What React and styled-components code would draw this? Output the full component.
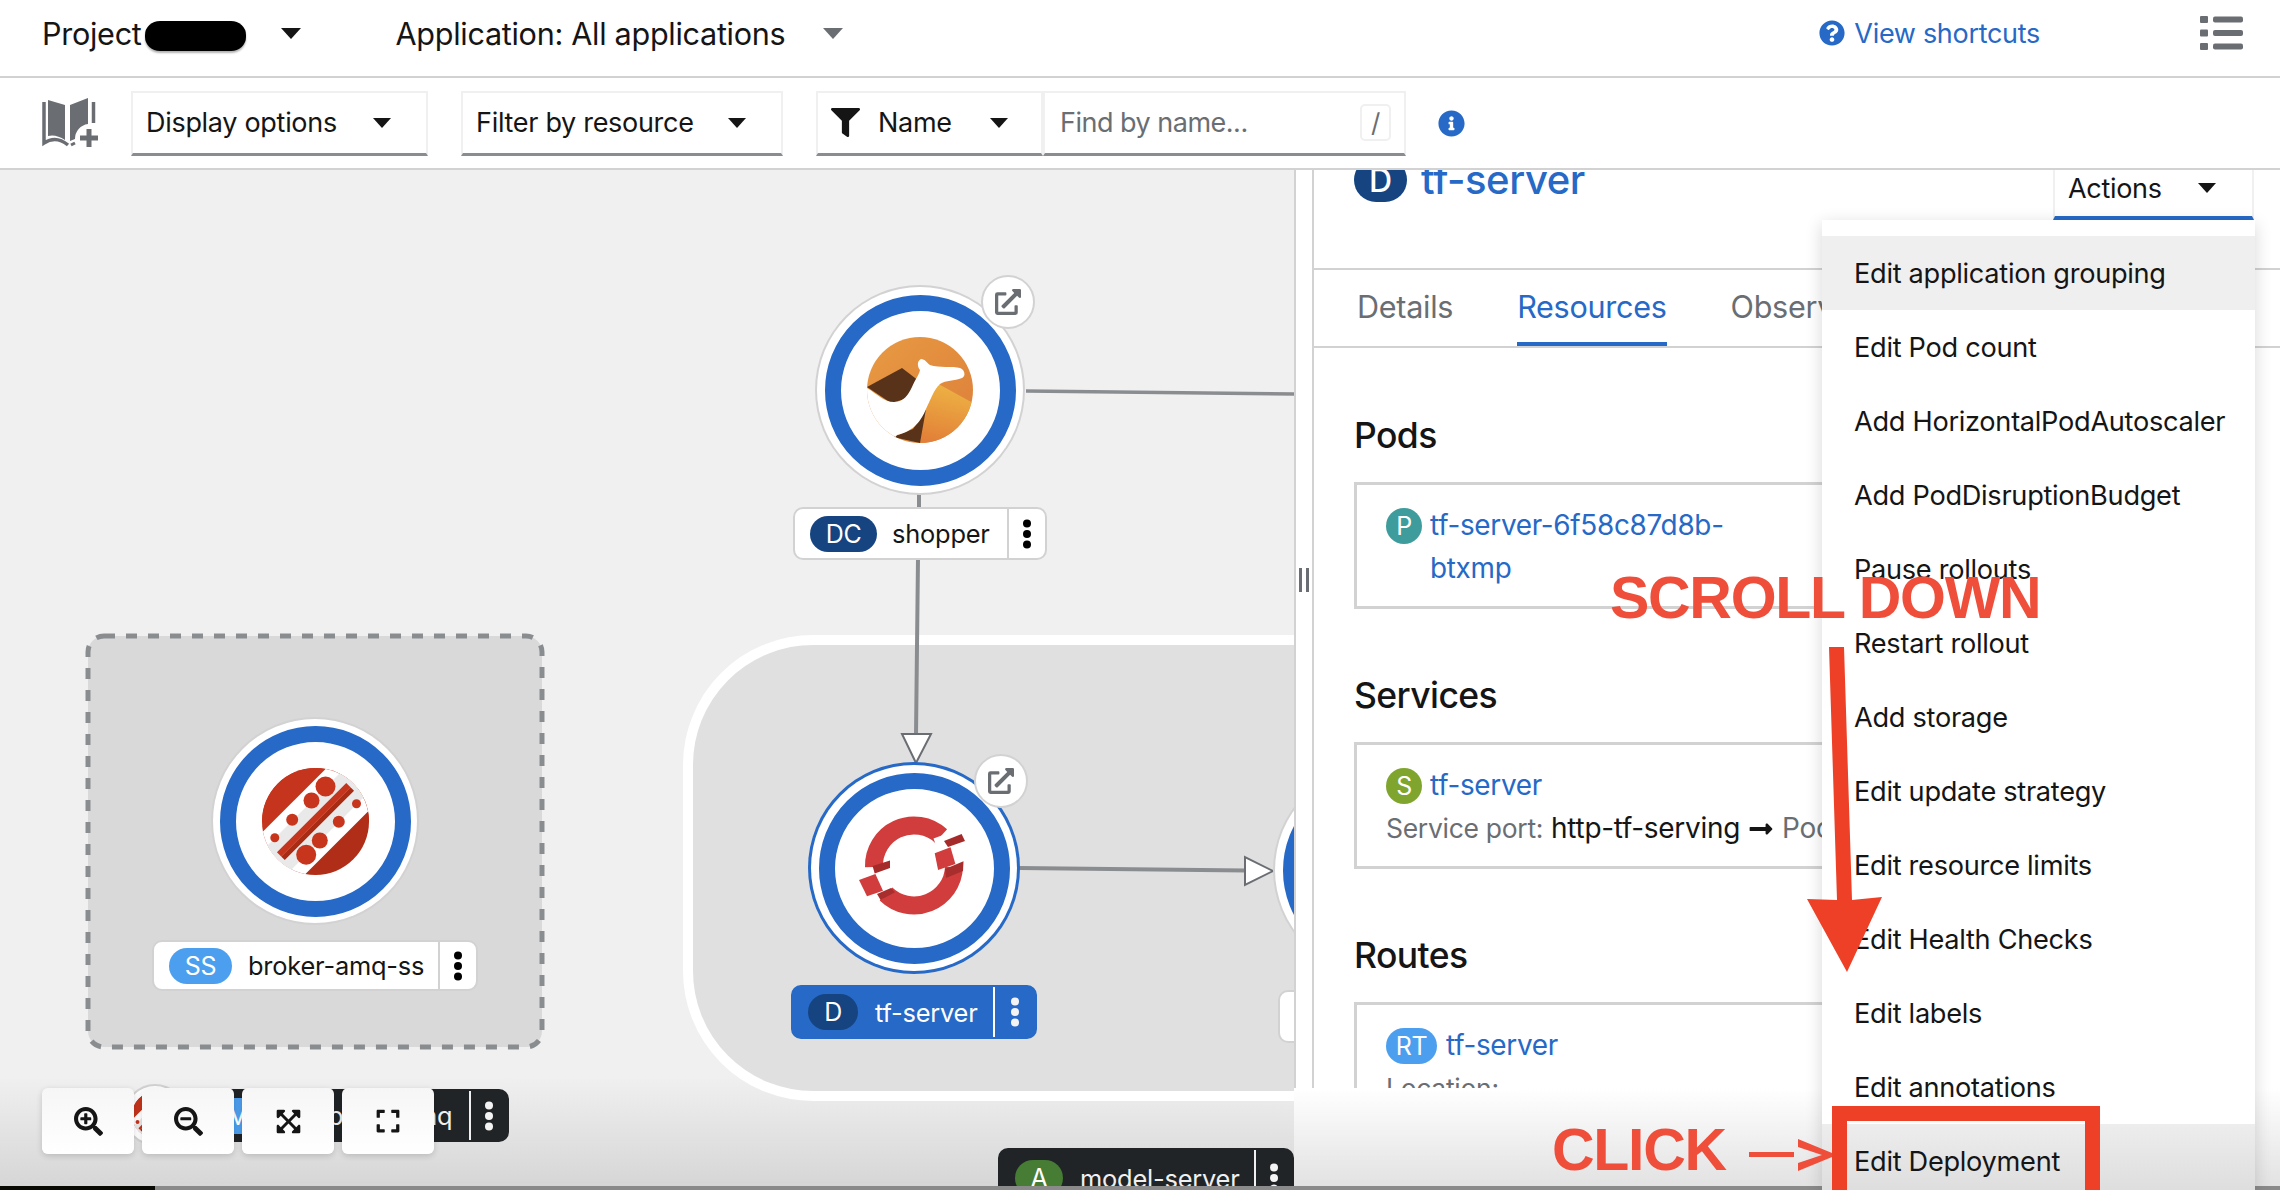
import React from "react";
import styled, { createGlobalStyle, css } from "styled-components";
import {
  FaSearchPlus, FaSearchMinus, FaExpandArrowsAlt, FaExpand,
  FaExternalLinkAlt, FaFilter, FaInfoCircle, FaQuestionCircle, FaLongArrowAltRight,
} from "react-icons/fa";

const BLUE = "#2669c6";
const LINE = "#d2d2d2";
const GREY = "#6a6e73";
const TOP = 170;

const Global = createGlobalStyle`
  html, body { margin: 0; padding: 0; background: #fff; }
  body { font-family: Inter, "Noto Sans", sans-serif; color: #151515; }
  * { box-sizing: border-box; }
`;

const Page = styled.div`
  position: relative;
  width: 2280px;
  height: 1190px;
  overflow: hidden;
  display: flex;
  flex-direction: column;
  background: #fff;
  font-size: 27px;
  letter-spacing: -0.3px;
`;

/* ---------- top bars ---------- */
const Header = styled.header`
  height: 78px;
  flex: none;
  display: flex;
  align-items: center;
  padding: 0 37px 10px 42px;
  border-bottom: 2px solid ${LINE};
`;
const HeaderText = styled.span`
  font-size: 30.6px;
  white-space: nowrap;
`;
const Redaction = styled.span`
  display: block;
  flex: none;
  width: 101px;
  height: 30px;
  margin: 6px 35px 0 3px;
  border-radius: 15px / 14px;
  background: #000;
  box-shadow: 0 2px 2px rgba(0, 0, 0, 0.3);
`;
const Caret = styled.span`
  display: block;
  flex: none;
  width: 0;
  height: 0;
  margin-left: ${(p) => p.$ml || 0};
  border-left: ${(p) => p.$size || 9}px solid transparent;
  border-right: ${(p) => p.$size || 9}px solid transparent;
  border-top: ${(p) => (p.$size || 9) * 1.15}px solid ${(p) => p.$color || "#151515"};
`;
const AppPicker = styled.div`
  display: flex;
  align-items: center;
  margin-left: 95px;
  gap: 38px;
`;
const Shortcuts = styled.a`
  display: flex;
  align-items: center;
  gap: 9px;
  margin-left: auto;
  color: ${BLUE};
  font-size: 27px;
`;
const ListGlyph = styled.svg`
  width: 43px;
  height: 34px;
  margin-left: 160px;
  margin-top: 0;
  fill: ${GREY};
`;

const Toolbar = styled.div`
  height: 92px;
  flex: none;
  display: flex;
  align-items: center;
  padding: 0 0 0 42px;
  border-bottom: 2px solid ${LINE};
`;
const BookGlyph = styled.svg`
  width: 58px;
  height: 50px;
  margin-right: 31px;
  flex: none;
`;
const Field = styled.div`
  display: flex;
  align-items: center;
  justify-content: space-between;
  width: ${(p) => p.$w}px;
  height: 65px;
  padding: 0 ${(p) => p.$pr || 35}px 0 13px;
  border: 2px solid #f0f0f0;
  border-bottom: 3px solid #8a8d90;
  margin-right: ${(p) => p.$mr || 0}px;
  flex: none;
  white-space: nowrap;
`;
const NameText = styled.span`
  margin-left: 18px;
`;
const Placeholder = styled.span`
  color: ${GREY};
  margin-left: 2px;
  letter-spacing: -0.5px;
`;
const Slash = styled.span`
  display: flex;
  align-items: center;
  justify-content: center;
  width: 31px;
  height: 37px;
  border: 2px solid #f0f0f0;
  border-radius: 5px;
  color: ${GREY};
  font-size: 26px;
`;
const InfoWrap = styled.span`
  display: flex;
  margin-left: 32px;
  color: ${BLUE};
`;

/* ---------- main area ---------- */
const Main = styled.main`
  flex: 1;
  min-height: 0;
  display: flex;
`;
const Canvas = styled.section`
  position: relative;
  width: 1294px;
  flex: none;
  overflow: hidden;
  background: linear-gradient(to top, #d6d6d6 0, #f0f0f0 110px);
`;
const placed = css`
  position: absolute;
  left: ${(p) => p.$x}px;
  top: ${(p) => p.$y - TOP}px;
`;
const Group = styled.div`
  ${placed}
  width: 800px;
  height: 466px;
  border: 10px solid #fff;
  border-radius: 130px;
  background: #e0e0e0;
`;
const Diagram = styled.svg`
  position: absolute;
  left: 0;
  top: 0;
`;
const Disc = styled.div`
  ${placed}
  width: ${(p) => p.$r * 2}px;
  height: ${(p) => p.$r * 2}px;
  margin: ${(p) => -p.$r}px 0 0 ${(p) => -p.$r}px;
  display: flex;
  align-items: center;
  justify-content: center;
  border-radius: 50%;
  background: #fff;
  box-shadow: ${(p) =>
    p.$selected ? `0 0 0 3px ${BLUE}` : "0 0 0 2px #d2d2d2"};
`;
const Ring = styled.div`
  width: 191px;
  height: 191px;
  display: flex;
  align-items: center;
  justify-content: center;
  border: 16px solid ${BLUE};
  border-radius: 50%;
  flex: none;
`;
const LinkBadge = styled.div`
  ${placed}
  width: 54px;
  height: 54px;
  margin: -27px 0 0 -27px;
  display: flex;
  align-items: center;
  justify-content: center;
  border-radius: 50%;
  background: #fff;
  border: 2px solid #d2d2d2;
  color: ${GREY};
`;
const tones = {
  light: { bg: "#fff", fg: "#151515", sep: "#d2d2d2", edge: "#d2d2d2" },
  selected: { bg: BLUE, fg: "#fff", sep: "#fff", edge: BLUE },
  dark: { bg: "#212427", fg: "#f0f0f0", sep: "#f0f0f0", edge: "#212427" },
};
const TopoLabel = styled.div`
  ${placed}
  width: ${(p) => p.$w}px;
  height: ${(p) => p.$h || 53}px;
  display: flex;
  align-items: center;
  padding-left: ${(p) => p.$pl || 15}px;
  border-radius: 10px;
  background: ${(p) => tones[p.$tone].bg};
  color: ${(p) => tones[p.$tone].fg};
  border: 2px solid ${(p) => tones[p.$tone].edge};
  white-space: nowrap;
  font-size: 25.4px;
  letter-spacing: -0.2px;
`;
const KindBadge = styled.span`
  display: flex;
  align-items: center;
  justify-content: center;
  flex: none;
  width: ${(p) => p.$w || 36}px;
  height: 36px;
  border-radius: 18px;
  background: ${(p) => p.$bg};
  color: #fff;
  font-size: ${(p) => p.$fs || 25}px;
  letter-spacing: -0.3px;
  margin-right: ${(p) => p.$mr ?? 8}px;
`;
const LabelName = styled.span`
  flex: 1;
`;
const KebabCell = styled.span`
  display: flex;
  align-items: center;
  justify-content: center;
  flex: none;
  align-self: stretch;
  width: ${(p) => (p.$tone === "selected" ? 42 : 38)}px;
  border-left: 2px solid ${(p) => tones[p.$tone].sep};
`;
const ZoomBar = styled.div`
  ${placed}
  display: flex;
  gap: 8px;
`;
const ZoomButton = styled.button`
  width: 92px;
  height: 66px;
  padding: 0;
  display: flex;
  align-items: center;
  justify-content: center;
  border: 0;
  border-radius: 6px;
  background: linear-gradient(#f6f6f6, #fff);
  box-shadow: 0 2px 6px rgba(0, 0, 0, 0.16);
  color: #151515;
`;

/* ---------- side panel ---------- */
const RightColumn = styled.div`
  flex: 1;
  min-width: 0;
  display: flex;
  flex-direction: column;
`;
const PanelRow = styled.div`
  flex: 1;
  min-height: 0;
  display: flex;
  border-left: 2px solid ${LINE};
  overflow: hidden;
`;
const Gutter = styled.div`
  width: 16px;
  flex: none;
  display: flex;
  justify-content: center;
  gap: 4px;
  padding-top: 398px;
  &::before, &::after {
    content: "";
    display: block;
    width: 3px;
    height: 24px;
    background: ${GREY};
  }
`;
const Panel = styled.div`
  flex: 1;
  min-width: 0;
  border-left: 2px solid ${LINE};
  display: flex;
  flex-direction: column;
`;
const TitleRow = styled.div`
  height: 100px;
  flex: none;
  display: flex;
  padding: 0 26px 0 40px;
  border-bottom: 2px solid ${LINE};
`;
const TitleBadge = styled.span`
  display: flex;
  align-items: center;
  justify-content: center;
  width: 53px;
  height: 44px;
  margin-top: -12px;
  border-radius: 22px;
  background: #154481;
  color: #fff;
  font-size: 32px;
  font-weight: 500;
`;
const TitleText = styled.a`
  margin: -15px 0 0 14px;
  font-size: 40px;
  font-weight: 500;
  line-height: 50px;
  letter-spacing: -0.4px;
  color: ${BLUE};
`;
const ActionsButton = styled.div`
  margin-left: auto;
  width: 201px;
  height: 50px;
  display: flex;
  align-items: center;
  justify-content: space-between;
  padding: 0 36px 10px 13px;
  border: 2px solid #f0f0f0;
  border-top: 0;
  border-bottom: 4px solid ${BLUE};
`;
const TabBar = styled.nav`
  height: 78px;
  flex: none;
  display: flex;
  gap: 64px;
  padding-left: 43px;
  border-bottom: 2px solid ${LINE};
`;
const Tab = styled.a`
  height: 76px;
  display: flex;
  align-items: center;
  font-size: 30.6px;
  color: ${(p) => (p.$active ? BLUE : GREY)};
  border-bottom: 4px solid ${(p) => (p.$active ? BLUE : "transparent")};
`;
const Sections = styled.div`
  padding: 65px 26px 0 40px;
  display: flex;
  flex-direction: column;
  gap: 64px;
`;
const Heading = styled.h2`
  margin: 1px 0 24px;
  font-size: 35.5px;
  line-height: 44px;
  font-weight: 500;
  letter-spacing: -0.6px;
`;
const ResourceBox = styled.div`
  height: 127px;
  padding: 19px 0 0 29px;
  border: 3px solid ${LINE};
  line-height: 43px;
  white-space: nowrap;
`;
const ResourceRow = styled.div`
  display: flex;
  align-items: flex-start;
`;
const ResourceBadge = styled(KindBadge)`
  margin-top: 4px;
`;
const LinkText = styled.a`
  display: block;
  color: ${BLUE};
  font-size: 27.9px;
`;
const Detail = styled.div`
  color: ${GREY};
  font-size: 26.5px;
  display: flex;
  align-items: center;
`;
const Strong = styled.span`
  color: ${(p) => p.$color || "#151515"};
  font-size: 28px;
  margin: 0 8px;
`;
const PanelFooter = styled.div`
  height: 98px;
  flex: none;
  background: linear-gradient(#fff, #e2e2e2);
`;
const StatusStrip = styled.div`
  height: 4px;
  flex: none;
  background: linear-gradient(to right, #0a0a05 155px, #8a8a8a 155px);
`;

/* ---------- actions menu ---------- */
const Menu = styled.ul`
  position: absolute;
  left: 1822px;
  top: 220px;
  width: 433px;
  height: 970px;
  margin: 0;
  padding: 16px 0 0;
  list-style: none;
  overflow: hidden;
  background: #fff;
  box-shadow: 0 4px 16px rgba(0, 0, 0, 0.16);
`;
const MenuItem = styled.li`
  height: 74px;
  flex: none;
  display: flex;
  align-items: center;
  padding-left: 32px;
  white-space: nowrap;
  font-size: 27.2px;
  background: ${(p) =>
    p.$state === "hover"
      ? "#efefef"
      : p.$state === "faded"
      ? "linear-gradient(#ededed, #dcdcdc)"
      : "transparent"};
`;

/* ---------- red annotations ---------- */
const Callout = styled.div`
  position: absolute;
  left: ${(p) => p.$x}px;
  top: ${(p) => p.$y}px;
  font-family: "Liberation Sans", Arial, sans-serif;
  font-weight: 700;
  font-size: 59px;
  line-height: 60px;
  letter-spacing: -1.3px;
  color: #ef4e3a;
  white-space: nowrap;
`;
const Scribble = styled.svg`
  position: absolute;
  left: 0;
  top: 0;
  pointer-events: none;
`;
const RedBox = styled.div`
  position: absolute;
  left: 1832px;
  top: 1106px;
  width: 268px;
  height: 100px;
  border: 15px solid #ee4027;
`;

const Kebab = ({ color }) => (
  <svg width="12" height="32" viewBox="0 0 12 32" fill={color}>
    <circle cx="6" cy="5.5" r="4" />
    <circle cx="6" cy="16" r="4" />
    <circle cx="6" cy="26.5" r="4" />
  </svg>
);

const CamelLogo = () => (
  <svg width="106" height="106" viewBox="0 0 106 106">
    <defs>
      <clipPath id="camelClip"><circle cx="53" cy="53" r="53" /></clipPath>
      <linearGradient id="camelSky" x1="0" y1="0" x2="1" y2="1">
        <stop offset="0" stopColor="#e89a42" />
        <stop offset="1" stopColor="#dc7f3a" />
      </linearGradient>
      <linearGradient id="camelHill" x1="0.5" y1="0" x2="0.3" y2="1">
        <stop offset="0" stopColor="#eeb544" />
        <stop offset="1" stopColor="#e27f38" />
      </linearGradient>
    </defs>
    <g clipPath="url(#camelClip)">
      <rect width="106" height="106" fill="url(#camelSky)" />
      <path d="M66 44 L106 66 L106 106 L52 106 L58 73 Z" fill="url(#camelHill)" />
      <path d="M0 50 L35 31 L52 44 L38 62 L24 66 Z" fill="#58331a" />
      <path d="M59 72 L53 106 L26 100 L46 92 Z" fill="#58331a" />
      <path d="M0 51 C10 57 17 65 27 65 C37 65 41 58 45 50 C48 43 52 38 53 33 C50 29 50 24 54 22 C58 22 60 26 63 28 C72 31 86 29 93 31 C98 33 99 39 95 41 C87 44 79 43 73 47 C67 52 63 64 59 72 C54 84 47 94 30 98 L20 110 L-4 100 Z" fill="#fff" />
    </g>
  </svg>
);

const ShiftLogo = () => (
  <svg width="116" height="110" viewBox="-58 -52 116 110">
    <path d="M-40 2 A40 40 0 0 1 27 -29" fill="none" stroke="#d13c3c" strokeWidth="18" />
    <path d="M40 2 A40 40 0 0 1 -28 29" fill="none" stroke="#d13c3c" strokeWidth="18" />
    <rect x="21" y="-30" width="40" height="14" fill="#fff" transform="rotate(-20 30 -24)" />
    <polygon points="30,-24 47.6,-31 51,-24 34,-18" fill="#a52a2a" />
    <polygon points="20.7,-11.7 36.5,-17.7 41.4,-1 24.1,5" fill="#d13c3c" />
    <polygon points="31,4 49.5,-3.7 49,6 32,13" fill="#a82e2e" />
    <polygon points="-41.4,1 -24,-4.5 -24,3 -39.3,8.5" fill="#a52a2a" />
    <polygon points="-60,9 -38,10 -24,26 -32,34 -50,32" fill="#fff" />
    <polygon points="-55,15 -38.6,9 -31,25.7 -47,31.3" fill="#d13c3c" />
    <polygon points="-37,29 -23,23 -19,27.3 -33.4,35" fill="#a82e2e" />
  </svg>
);

const amqDots = [
  [10, -35, 10], [-4, -21, 8], [-23.3, -1.7, 6], [-40.7, 16.3, 4.5],
  [41, -17.7, 4.5], [23.3, 0.3, 6], [4.3, 19, 8], [-9.3, 33.3, 10],
];
const AmqLogo = ({ size = 107, id = "amq" }) => (
  <svg width={size} height={size} viewBox="-53.5 -53.5 107 107">
    <defs><clipPath id={id}><circle r="53.5" /></clipPath></defs>
    <g clipPath={`url(#${id})`}>
      <rect x="-54" y="-54" width="108" height="54" fill="#c5341c" />
      <polygon points="-54,-54 54,-54 -54,54" fill="#c5341c" />
      <polygon points="54,-54 54,54 -54,54" fill="#b02d17" />
      <g transform="rotate(-45)">
        <rect x="-70" y="-30" width="140" height="60" fill="#fff" />
        <rect x="-70" y="-17" width="140" height="34" fill="#e9e9e9" />
        <rect x="-49" y="-5.5" width="98" height="6" fill="#c5341c" />
        <rect x="-49" y="0.5" width="98" height="5" fill="#a82b14" />
      </g>
      {amqDots.map(([x, y, r]) => (
        <circle key={`${x}${y}`} cx={x} cy={y} r={r} fill="#c8351d" />
      ))}
    </g>
  </svg>
);

const menuItems = [
  "Edit application grouping", "Edit Pod count", "Add HorizontalPodAutoscaler",
  "Add PodDisruptionBudget", "Pause rollouts", "Restart rollout", "Add storage",
  "Edit update strategy", "Edit resource limits", "Edit Health Checks",
  "Edit labels", "Edit annotations", "Edit Deployment",
];

const Label = ({ x, y, w, tone, badge, badgeW, badgeBg, name, gap, pl, h, kebab = true }) => (
  <TopoLabel $x={x} $y={y} $w={w} $tone={tone} $pl={pl} $h={h}>
    <KindBadge $w={badgeW} $bg={badgeBg} $mr={gap}>{badge}</KindBadge>
    <LabelName>{name}</LabelName>
    {kebab && (
      <KebabCell $tone={tone}>
        <Kebab color={tone === "light" ? "#000" : "#f4f4f4"} />
      </KebabCell>
    )}
  </TopoLabel>
);

export default function App() {
  return (
    <Page>
      <Global />
      <Header>
        <HeaderText>Project</HeaderText>
        <Redaction />
        <Caret $size={10} />
        <AppPicker>
          <HeaderText>Application: All applications</HeaderText>
          <Caret $size={10} $color={GREY} />
        </AppPicker>
        <Shortcuts>
          <FaQuestionCircle size={26} />
          View shortcuts
        </Shortcuts>
        <ListGlyph viewBox="0 0 43 34">
          <rect x="0" y="0" width="8" height="7" rx="1" />
          <rect x="0" y="13.5" width="8" height="7" rx="1" />
          <rect x="0" y="27" width="8" height="7" rx="1" />
          <rect x="13" y="0.5" width="30" height="6" rx="2" />
          <rect x="13" y="14" width="30" height="6" rx="2" />
          <rect x="13" y="27.5" width="30" height="6" rx="2" />
        </ListGlyph>
      </Header>

      <Toolbar>
        <BookGlyph viewBox="0 0 58 50">
          <path fill={GREY} d="M6 2 L23 7 V42 Q14 36 6 38 Z" />
          <path fill={GREY} d="M28 7 L46 0 V26 A15 15 0 0 0 33 41 L28 43 Z" />
          <path fill="none" stroke={GREY} strokeWidth="3.5" d="M2 4 V45 Q14 37 26 47" />
          <path fill="none" stroke={GREY} strokeWidth="3.5" d="M51.5 4 V25" />
          <path fill="none" stroke={GREY} strokeWidth="3" d="M29 47 L33 45" />
          <path fill="none" stroke={GREY} strokeWidth="5" d="M47 31 V49 M38 40 H56" />
        </BookGlyph>
        <Field $w={297} $mr={33}>
          Display options
          <Caret />
        </Field>
        <Field $w={322} $mr={33}>
          Filter by resource
          <Caret />
        </Field>
        <Field $w={227} $pr={33}>
          <FaFilter size={29} />
          <NameText>Name</NameText>
          <Caret $ml="auto" />
        </Field>
        <Field $w={363} $pr={13}>
          <Placeholder>Find by name...</Placeholder>
          <Slash>/</Slash>
        </Field>
        <InfoWrap><FaInfoCircle size={27} /></InfoWrap>
      </Toolbar>

      <Main>
        <Canvas>
          <Group $x={683} $y={635} />
          <Diagram width="1294" height="1016" viewBox={`0 ${TOP} 1294 1016`}>
            <rect x="88" y="636" width="454" height="411" rx="16" fill="#d9d9d9"
              stroke="#8a8d90" strokeWidth="5" strokeDasharray="11 11" />
            <path d="M1026 391 L1294 394" stroke="#8a8d90" strokeWidth="3.5" />
            <path d="M919 492 V510 M918 558 L916 735" stroke="#8a8d90" strokeWidth="4" fill="none" />
            <path d="M1019 868 L1246 870.5" stroke="#8a8d90" strokeWidth="4" />
            <polygon points="902,734 931,734 916,763" fill="#fff" stroke={GREY} strokeWidth="2" />
            <polygon points="1245,857 1245,885 1273,871" fill="#fff" stroke={GREY} strokeWidth="2" />
          </Diagram>

          <Disc $x={315} $y={821} $r={102}><Ring><AmqLogo /></Ring></Disc>
          <Label x={152} y={940} w={326} h={51} tone="light" badge="SS" badgeW={63} badgeBg="#4c9fee" gap={16} name="broker-amq-ss" />

          <Disc $x={920} $y={390} $r={103}><Ring><CamelLogo /></Ring></Disc>
          <LinkBadge $x={1008} $y={302}><FaExternalLinkAlt size={26} /></LinkBadge>
          <Label x={793} y={507} w={254} tone="light" badge="DC" badgeW={67} badgeBg="#154481" gap={15} name="shopper" />

          <Disc $x={914} $y={868} $r={103} $selected><Ring><ShiftLogo /></Ring></Disc>
          <LinkBadge $x={1001} $y={781}><FaExternalLinkAlt size={26} /></LinkBadge>
          <Label x={791} y={985} w={246} h={54} tone="selected" badge="D" badgeW={50} badgeBg="#154481" gap={17} name="tf-server" />

          <Disc $x={1378} $y={870} $r={103}><Ring /></Disc>
          <Label x={1278} y={990} w={200} tone="light" badge="DC" badgeW={67} badgeBg="#154481" gap={15} name="" kebab={false} />

          <Label x={142} y={1089} w={367} tone="dark" badge="M" badgeW={52} badgeBg="#4c9fee" gap={64} pl={68} name="broker-mq" />
          <Disc $x={155} $y={1115} $r={29}><AmqLogo size={46} id="amqSmall" /></Disc>
          <Label x={998} y={1148} w={296} h={60} tone="dark" badge="A" badgeW={48} badgeBg="#467c34" gap={17} name="model-server" />

          <ZoomBar $x={42} $y={1088}>
            <ZoomButton><FaSearchPlus size={29} /></ZoomButton>
            <ZoomButton><FaSearchMinus size={29} /></ZoomButton>
            <ZoomButton><FaExpandArrowsAlt size={27} /></ZoomButton>
            <ZoomButton><FaExpand size={26} /></ZoomButton>
          </ZoomBar>
        </Canvas>

        <RightColumn>
          <PanelRow>
            <Gutter />
            <Panel>
              <TitleRow>
                <TitleBadge>D</TitleBadge>
                <TitleText>tf-server</TitleText>
                <ActionsButton>Actions<Caret /></ActionsButton>
              </TitleRow>
              <TabBar>
                <Tab>Details</Tab>
                <Tab $active>Resources</Tab>
                <Tab>Observe</Tab>
              </TabBar>
              <Sections>
                <section>
                  <Heading>Pods</Heading>
                  <ResourceBox>
                    <ResourceRow>
                      <ResourceBadge $bg="#3f9c9c" $mr={8}>P</ResourceBadge>
                      <div>
                        <LinkText>tf-server-6f58c87d8b-</LinkText>
                        <LinkText>btxmp</LinkText>
                      </div>
                    </ResourceRow>
                  </ResourceBox>
                </section>
                <section>
                  <Heading>Services</Heading>
                  <ResourceBox>
                    <ResourceRow>
                      <ResourceBadge $bg="#7fa52f" $mr={8}>S</ResourceBadge>
                      <LinkText>tf-server</LinkText>
                    </ResourceRow>
                    <Detail>
                      Service port:<Strong>http-tf-serving</Strong>
                      <FaLongArrowAltRight size={26} color="#151515" />
                      <Strong $color={GREY}>Pod port: 8501</Strong>
                    </Detail>
                  </ResourceBox>
                </section>
                <section>
                  <Heading>Routes</Heading>
                  <ResourceBox>
                    <ResourceRow>
                      <ResourceBadge $w={51} $bg="#4c9fee" $mr={9}>RT</ResourceBadge>
                      <LinkText>tf-server</LinkText>
                    </ResourceRow>
                    <Detail>Location:</Detail>
                  </ResourceBox>
                </section>
              </Sections>
            </Panel>
          </PanelRow>
          <PanelFooter />
        </RightColumn>
      </Main>
      <StatusStrip />

      <Menu>
        {menuItems.map((item, i) => (
          <MenuItem key={item} $state={i === 0 ? "hover" : i === menuItems.length - 1 ? "faded" : "none"}>
            {item}
          </MenuItem>
        ))}
      </Menu>

      <Callout $x={1610} $y={568}>SCROLL DOWN</Callout>
      <Callout $x={1552} $y={1120}>CLICK</Callout>
      <Scribble width="2280" height="1190" viewBox="0 0 2280 1190">
        <polygon points="1829,647 1844,647 1852,900 1882,897 1847,972 1807,899 1837,900" fill="#ee4027" />
        <rect x="1749" y="1152" width="45" height="5" fill="#ef4e3a" />
        <polygon points="1798,1139 1832,1153 1832,1157 1798,1171 1798,1163 1822,1155 1798,1147" fill="#ef4e3a" />
      </Scribble>
      <RedBox />
    </Page>
  );
}
